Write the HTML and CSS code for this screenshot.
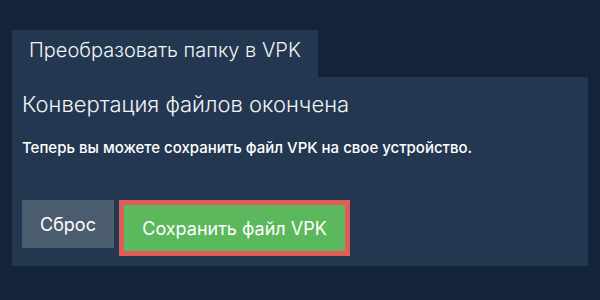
FILE: index.html
```html
<!DOCTYPE html>
<html lang="ru">
<head>
<meta charset="utf-8">
<link rel="stylesheet" href="styles.css">
</head>
<body>
<div class="wrap">
  <div class="tab">Преобразовать папку в VPK</div>
  <div class="panel">
    <h2 class="title">Конвертация файлов окончена</h2>
    <p class="msg">Теперь вы можете сохранить файл VPK на свое устройство.</p>
    <div class="actions">
      <button class="btn reset">Сброс</button>
      <button class="btn save">Сохранить файл VPK</button>
    </div>
  </div>
</div>
</body>
</html>
```
FILE: styles.css
```css
html, body {
  margin: 0;
  padding: 0;
  background: #12233a;
  width: 600px;
  height: 300px;
  overflow: hidden;
  font-family: Inter, "Noto Sans", sans-serif;
  color: #ffffff;
}
.wrap {
  padding: 30px 12px 0 12px;
}
.tab {
  display: inline-block;
  vertical-align: top;
  background: #233750;
  height: 47px;
  line-height: 41px;
  padding: 0 17px;
  font-size: 20px;
  font-weight: 300;
  color: #f2f4f6;
}
.panel {
  background: #233750;
  height: 189px;
  padding: 14px 10px 0 10px;
  box-sizing: border-box;
}
.title {
  margin: 0;
  font-size: 22px;
  font-weight: 300;
  line-height: 26px;
  color: #f2f4f6;
}
.msg {
  margin: 22px 0 0 0;
  font-size: 15px;
  font-weight: 500;
  line-height: 18px;
}
.actions {
  display: flex;
  align-items: flex-start;
  gap: 5px;
  margin-top: 43px;
}
.btn {
  font-family: inherit;
  font-size: 18px;
  font-weight: 400;
  color: #ffffff;
  border: none;
  padding: 0;
  cursor: pointer;
}
.reset {
  background: #4b5c6f;
  width: 92px;
  height: 48px;
}
.save {
  background: #5cb85c;
  width: 231px;
  height: 56px;
  border: 5px solid #df5c58;
  box-sizing: border-box;
}
```
